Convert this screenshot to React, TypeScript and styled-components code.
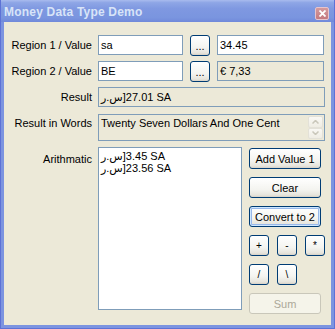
import React from 'react'
import styled, { createGlobalStyle, css } from 'styled-components'

const GlobalStyle = createGlobalStyle`
  html, body {
    margin: 0;
    padding: 0;
    background: #ffffff;
  }
  body {
    font-family: "Liberation Sans", "DejaVu Sans", Arial, sans-serif;
    font-size: 11px;
    color: #000000;
  }
`

const Window = styled.div`
  width: 335px;
  height: 329px;
  box-sizing: border-box;
  display: flex;
  flex-direction: column;
  background: #7c94e0;
  border: 1px solid #5d72d6;
  border-top: none;
`

const TitleBar = styled.div`
  height: 22px;
  flex: none;
  display: flex;
  align-items: center;
  justify-content: space-between;
  padding: 0 5px 0 3px;
  background: linear-gradient(
    to bottom,
    #a9bbee 0%,
    #8ea6e6 12%,
    #7f98e1 40%,
    #7a95df 80%,
    #7089da 100%
  );
`

const Title = styled.span`
  color: #d8e4f8;
  font-family: "Liberation Sans", Arial, sans-serif;
  font-weight: bold;
  font-size: 12px;
  letter-spacing: 0.2px;
  margin-top: 1px;
`

const CloseBox = styled.div`
  width: 14px;
  height: 13px;
  margin-top: 4px;
  box-sizing: border-box;
  border: 1px solid #e7c4cc;
  border-radius: 2px;
  background: linear-gradient(to bottom, #d39a9e, #c47a80);
  display: flex;
  align-items: center;
  justify-content: center;
`

const Client = styled.div`
  flex: 1;
  margin: 0 3px 3px;
  background: #ece9d8;
  display: flex;
  flex-direction: column;
  padding: 13px 6px 0 0;
`

const FormRow = styled.div<{ $top?: number }>`
  display: flex;
  align-items: flex-start;
  gap: 6px;
  margin-top: ${({ $top }) => $top ?? 0}px;
`

const Label = styled.div<{ $pad?: number }>`
  width: 88px;
  flex: none;
  text-align: right;
  line-height: 13px;
  padding-top: ${({ $pad }) => $pad ?? 4}px;
  white-space: nowrap;
`

const Field = styled.div`
  display: flex;
  gap: 7px;
  align-items: flex-start;
`

const TextBox = styled.div<{ $width: number; $readOnly?: boolean; $height?: number }>`
  width: ${({ $width }) => $width}px;
  height: ${({ $height }) => $height ?? 20}px;
  box-sizing: border-box;
  border: 1px solid #7f9db9;
  background: ${({ $readOnly }) => ($readOnly ? '#ece9d8' : '#ffffff')};
  padding: 0 2px;
  line-height: 18px;
  white-space: nowrap;
  overflow: hidden;
`

const buttonBase = css`
  box-sizing: border-box;
  border: 1px solid #003c74;
  border-radius: 3px;
  background: linear-gradient(to bottom, #ffffff 0%, #f4f4f0 60%, #e6e4dc 90%, #d6d0c5 100%);
  font-family: "Liberation Sans", Arial, sans-serif;
  font-size: 11px;
  color: #000000;
  padding: 0;
  display: flex;
  align-items: center;
  justify-content: center;
`

const Button = styled.button<{ $width?: number; $focused?: boolean }>`
  ${buttonBase}
  width: ${({ $width }) => $width ?? 72}px;
  height: 21px;
  flex: none;
  ${({ $focused }) =>
    $focused &&
    css`
      box-shadow: inset 0 0 0 1px #cee7ff, inset 0 0 0 2px #98b8ea;
    `}
  &:disabled {
    border-color: #c9c7ba;
    background: #f5f4ea;
    color: #aca899;
  }
`

const SmallButton = styled(Button)`
  width: 20px;
  font-size: 10px;
`

const ArabicAmount = styled.bdo`
  font-family: "Liberation Sans", "DejaVu Sans", sans-serif;
`

const WordsBox = styled.div`
  width: 227px;
  height: 27px;
  box-sizing: border-box;
  border: 1px solid #7f9db9;
  background: #ece9d8;
  display: flex;
`

const WordsText = styled.div`
  flex: 1;
  padding: 2px 2px 0;
  line-height: 13px;
  white-space: nowrap;
`

const ScrollBar = styled.div`
  width: 15px;
  margin-right: 1px;
  display: flex;
  flex-direction: column;
  padding: 1px 0;
`

const ScrollArrow = styled.div`
  flex: 1;
  box-sizing: border-box;
  border: 1px solid #e3e1d8;
  border-radius: 2px;
  background: linear-gradient(to bottom, #f9f8f4, #efede4);
  display: flex;
  align-items: center;
  justify-content: center;
`

const ListBox = styled.div`
  width: 146px;
  height: 163px;
  box-sizing: border-box;
  border: 1px solid #7f9db9;
  background: #ffffff;
  padding: 2px 2px 0;
  line-height: 12px;
`

const ButtonColumn = styled.div`
  display: flex;
  flex-direction: column;
  gap: 8px;
  margin-top: 1px;
  margin-left: 1px;
`

const OpRow = styled.div`
  display: flex;
  gap: 8px;
`

const Chevron = ({ up }: { up?: boolean }) => (
  <svg width="7" height="4" viewBox="0 0 7 4">
    <path
      d={up ? 'M0.5 3.5 L3.5 0.5 L6.5 3.5' : 'M0.5 0.5 L3.5 3.5 L6.5 0.5'}
      fill="none"
      stroke="#c9c7ba"
      strokeWidth="1.5"
    />
  </svg>
)

const Amount = ({ value }: { value: string }) => (
  <ArabicAmount dir="ltr">{`ر.س]${value} SA`}</ArabicAmount>
)

export default function App() {
  return (
    <>
      <GlobalStyle />
      <Window>
        <TitleBar>
          <Title>Money Data Type Demo</Title>
          <CloseBox>
            <svg width="7" height="7" viewBox="0 0 7 7">
              <path d="M0.5 0.5 L6.5 6.5 M6.5 0.5 L0.5 6.5" stroke="#ffffff" strokeWidth="1.8" />
            </svg>
          </CloseBox>
        </TitleBar>
        <Client>
          <FormRow>
            <Label>Region 1 / Value</Label>
            <Field>
              <TextBox $width={85}>sa</TextBox>
              <Button $width={20}>...</Button>
              <TextBox $width={107}>34.45</TextBox>
            </Field>
          </FormRow>
          <FormRow $top={5}>
            <Label>Region 2 / Value</Label>
            <Field>
              <TextBox $width={85}>BE</TextBox>
              <Button $width={20}>...</Button>
              <TextBox $width={107} $readOnly>
                € 7,33
              </TextBox>
            </Field>
          </FormRow>
          <FormRow $top={5}>
            <Label>Result</Label>
            <TextBox $width={227} $readOnly>
              <Amount value="27.01" />
            </TextBox>
          </FormRow>
          <FormRow $top={7}>
            <Label $pad={3}>Result in Words</Label>
            <WordsBox>
              <WordsText>Twenty Seven Dollars And One Cent</WordsText>
              <ScrollBar>
                <ScrollArrow>
                  <Chevron up />
                </ScrollArrow>
                <ScrollArrow>
                  <Chevron />
                </ScrollArrow>
              </ScrollBar>
            </WordsBox>
          </FormRow>
          <FormRow $top={6}>
            <Label $pad={6}>Arithmatic</Label>
            <ListBox>
              <div>
                <Amount value="3.45" />
              </div>
              <div>
                <Amount value="23.56" />
              </div>
            </ListBox>
            <ButtonColumn>
              <Button>Add Value 1</Button>
              <Button>Clear</Button>
              <Button $focused>Convert to 2</Button>
              <OpRow>
                <SmallButton>+</SmallButton>
                <SmallButton>-</SmallButton>
                <SmallButton>*</SmallButton>
              </OpRow>
              <OpRow>
                <SmallButton>/</SmallButton>
                <SmallButton>\</SmallButton>
              </OpRow>
              <Button disabled>Sum</Button>
            </ButtonColumn>
          </FormRow>
        </Client>
      </Window>
    </>
  )
}
